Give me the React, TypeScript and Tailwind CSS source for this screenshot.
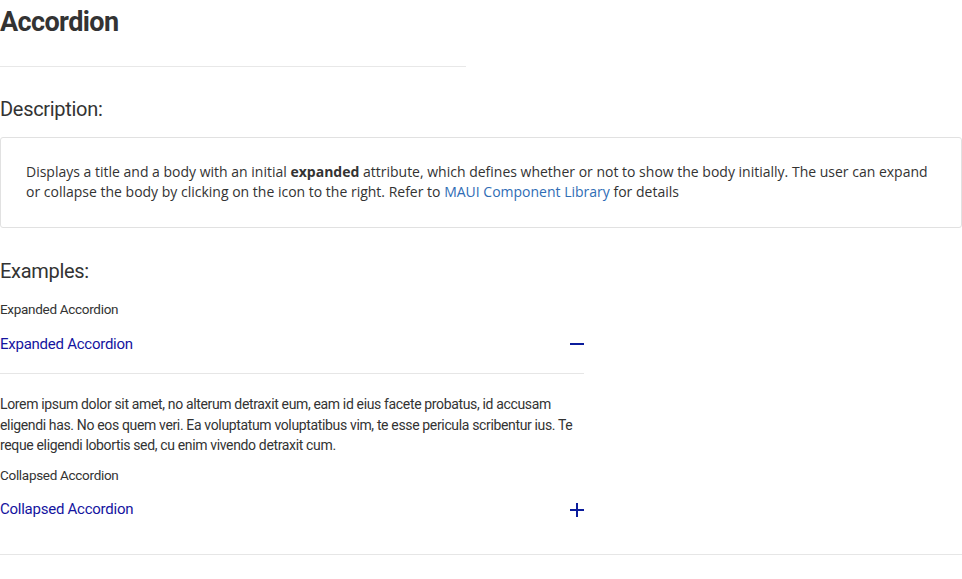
import React, { useState } from 'react';

const titleFont = "font-['Roboto','Liberation_Sans',sans-serif]";

function Accordion({ title, expanded, children }: { title: string; expanded?: boolean; children?: React.ReactNode }) {
  const [open, setOpen] = useState(!!expanded);
  return (
    <div>
      <button
        type="button"
        onClick={() => setOpen(!open)}
        className="flex w-[584px] items-center justify-between h-[38px] text-left text-[15px] tracking-[-0.25px] text-[#1414a0]"
      >
        <span>{title}</span>
        <svg width="14" height="14" viewBox="0 0 14 14">
          <rect x="0" y="6" width="14" height="2" fill="#0b1c9c" />
          {!open && <rect x="6" y="0" width="2" height="14" fill="#0b1c9c" />}
        </svg>
      </button>
      {open ? (
        <>
          <div className="mt-[10px] w-[584px] border-t border-[#e6e6e6]" />
          <div className="pt-[20px] w-[584px] text-[14px] leading-[20.5px] tracking-[-0.35px] text-[#333]">{children}</div>
        </>
      ) : (
        <div className="mt-[25px] w-full border-t border-[#e6e6e6]" />
      )}
    </div>
  );
}

export default function App() {
  return (
    <div className={`w-[962px] bg-white text-[#333] ${titleFont}`}>
      <h1 className="pt-[4px] text-[27px] leading-[36px] font-bold tracking-[-0.6px] text-[#333]">Accordion</h1>
      <div className="mt-[26px] w-[466px] border-t border-[#e8e8e8]" />
      <h2 className="mt-[29px] text-[20px] leading-[26px] tracking-[-0.3px] font-normal">Description:</h2>
      <div className="mt-[15px] rounded-[3px] border border-[#e1e1e1] pl-[25px] pr-[28px] pt-[24px] pb-[25px] font-['Open_Sans','Liberation_Sans',sans-serif] text-[14px] leading-[20px] tracking-[0px] text-[#333]">
        Displays a title and a body with an initial <b>expanded</b> attribute, which defines whether or not to show the body initially. The user can expand or collapse the body by clicking on the icon to the right. Refer to{' '}
        <a href="#" className="text-[#2f6db5]">MAUI Component Library</a> for details
      </div>
      <h2 className="mt-[30px] text-[20px] leading-[26px] tracking-[-0.3px] font-normal">Examples:</h2>
      <div className="mt-[17px] text-[13.5px] leading-[16px] tracking-[-0.3px]">Expanded Accordion</div>
      <div className="mt-[8px]">
        <Accordion title="Expanded Accordion" expanded>
          Lorem ipsum dolor sit amet, no alterum detraxit eum, eam id eius facete probatus, id accusam eligendi has. No eos quem veri. Ea voluptatum voluptatibus vim, te esse pericula scribentur ius. Te reque eligendi lobortis sed, cu enim vivendo detraxit cum.
        </Accordion>
      </div>
      <div className="mt-[11px] text-[13.5px] leading-[16px] tracking-[-0.3px]">Collapsed Accordion</div>
      <div className="mt-[8px]">
        <Accordion title="Collapsed Accordion" />
      </div>
      <div className="h-[24px]" />
    </div>
  );
}
